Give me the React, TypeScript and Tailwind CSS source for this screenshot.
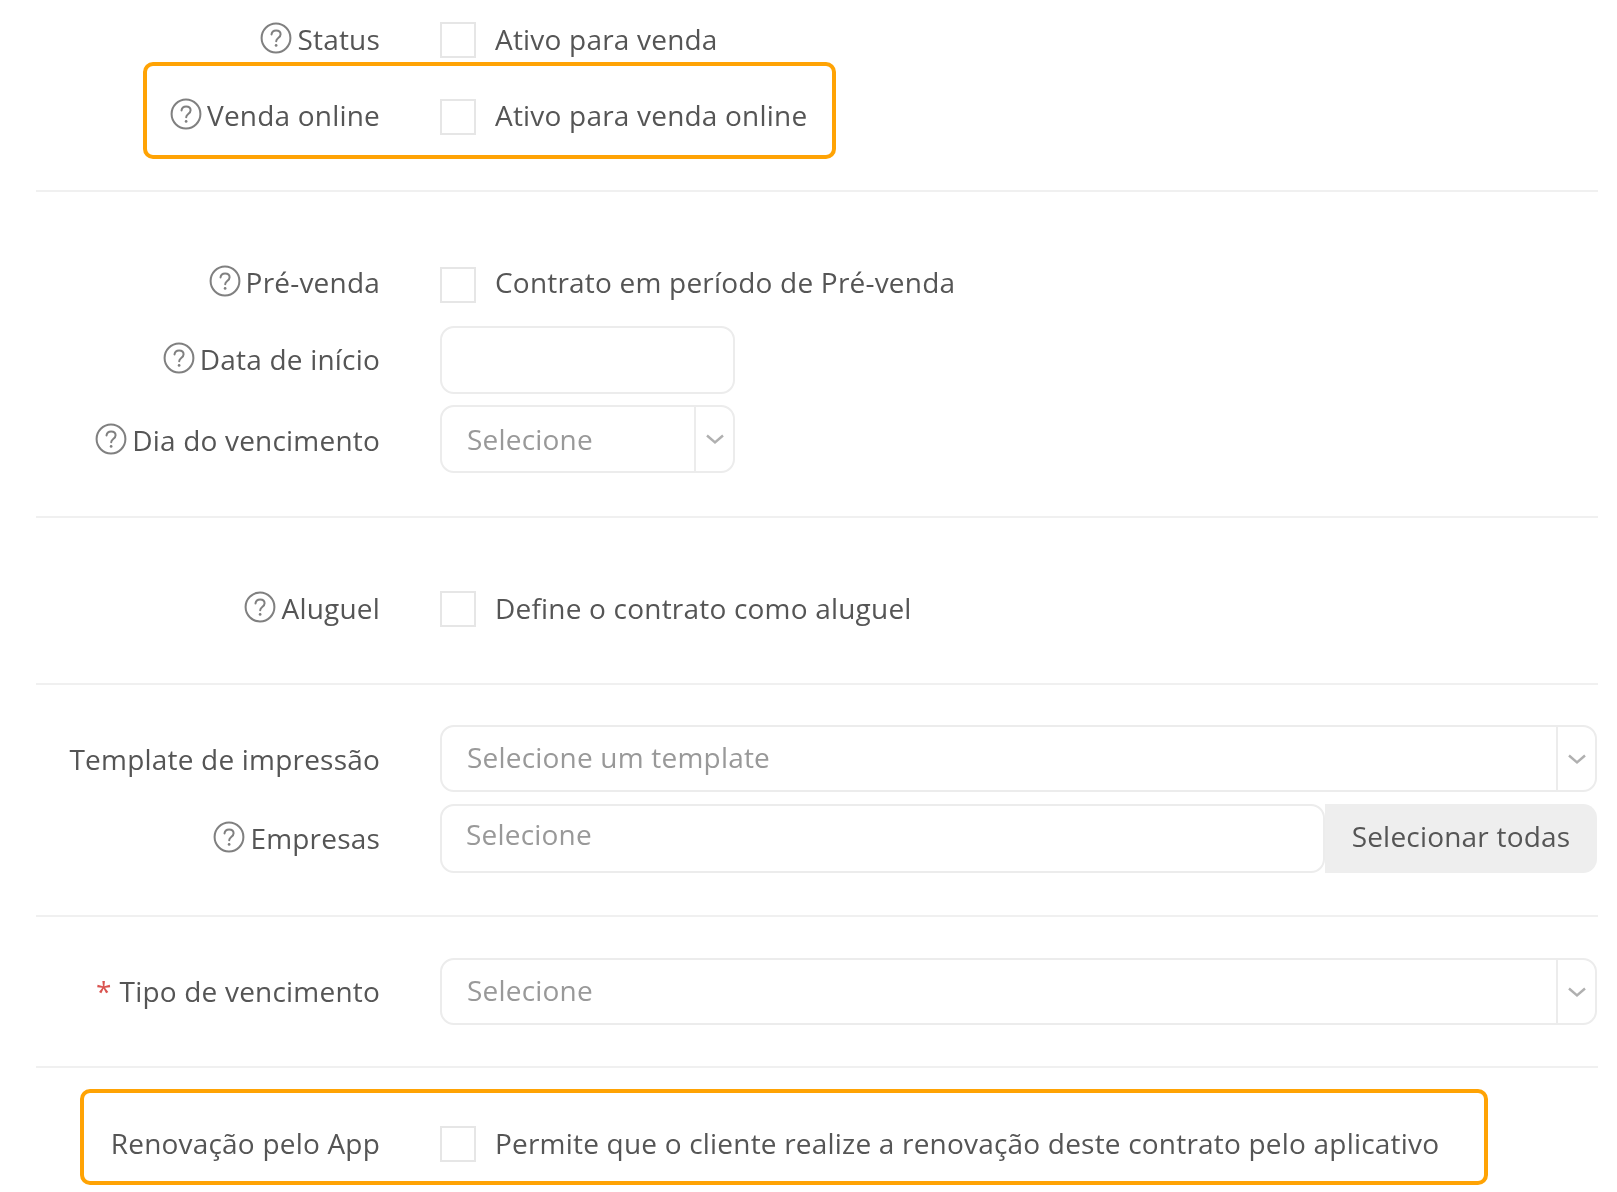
import React from "react";

const Help = () => (
  <svg width="32" height="32" viewBox="0 0 30 30" fill="none" className="shrink-0 mr-[5px] -mt-[2px]">
    <circle cx="15" cy="15" r="13.500" stroke="#808080" strokeWidth="1.900" />
    <path d="M10.800 11.600c.3-2.400 2-3.700 4.300-3.700 2.500 0 4.200 1.500 4.200 3.600 0 1.700-1 2.600-2.200 3.500-1.200.9-1.900 1.600-1.900 3.100" stroke="#808080" strokeWidth="1.900" strokeLinecap="round" />
    <circle cx="15.100" cy="22" r="1.300" fill="#808080" />
  </svg>
);

const Label = ({ text, help, required, pb }: { text: string; help?: boolean; required?: boolean; pb: string }) => (
  <div className={`w-[344px] shrink-0 flex items-center justify-end text-[#555] whitespace-nowrap ${pb}`}>
    {help && <Help />}
    {required && <span className="text-[#d9534f] mr-[8px]">*</span>}
    <span>{text}</span>
  </div>
);

const Box = () => <span className="w-[36px] h-[36px] shrink-0 border-2 border-[#e6e6e6] bg-white" />;

const CheckRow = ({ text, note, help = true, className, pb }: { text: string; note: string; help?: boolean; className: string; pb: string }) => (
  <div className={`flex items-center h-[36px] ${className}`}>
    <Label text={text} help={help} pb={pb} />
    <div className="ml-[60px] flex items-center">
      <Box />
      <span className={`ml-[19px] text-[#555] whitespace-nowrap ${pb}`}>{note}</span>
    </div>
  </div>
);

const Chevron = () => (
  <svg width="20" height="12" viewBox="0 0 20 12" fill="none">
    <path d="M2 2.500l8 7 8-7" stroke="#b0b0b0" strokeWidth="2.400" />
  </svg>
);

const Select = ({ text, w, h, pb }: { text: string; w: string; h: string; pb: string }) => (
  <div className={`${w} ${h} flex border-2 border-[#ececec] rounded-[14px] bg-white`}>
    <div className={`flex-1 flex items-center pl-[25px] text-[#999] whitespace-nowrap ${pb}`}>{text}</div>
    <div className="w-[39px] flex items-center justify-center border-l-2 border-[#ececec]">
      <Chevron />
    </div>
  </div>
);

const Divider = ({ className }: { className: string }) => <div className={`h-[2px] bg-[#f0f0f0] ${className}`} />;

export default function App() {
  return (
    <div
      className="relative w-[1617px] h-[1192px] overflow-hidden bg-white pl-[36px] pr-[19px] pt-[22px] text-[28px] tracking-[0.2px] blur-[0.4px]"
      style={{ fontFamily: '"Open Sans", sans-serif' }}
    >
      <CheckRow text="Status" note="Ativo para venda" className="" pb="pb-[2px]" />
      <CheckRow text="Venda online" note="Ativo para venda online" className="mt-[41px]" pb="pb-[4px]" />
      <Divider className="mt-[55px]" />

      <CheckRow text="Pré-venda" note="Contrato em período de Pré-venda" className="mt-[75px]" pb="pb-[6px]" />
      <div className="flex items-center h-[68px] mt-[23px]">
        <Label text="Data de início" help pb="pb-[2px]" />
        <div className="ml-[60px] w-[295px] h-full border-2 border-[#ececec] rounded-[14px] bg-white" />
      </div>
      <div className="flex items-center h-[68px] mt-[11px]">
        <Label text="Dia do vencimento" help pb="pt-[2px]" />
        <div className="ml-[60px]">
          <Select text="Selecione" w="w-[295px]" h="h-[68px]" pb="pb-[1px]" />
        </div>
      </div>
      <Divider className="mt-[43px]" />

      <CheckRow text="Aluguel" note="Define o contrato como aluguel" className="mt-[73px]" pb="pb-[2px]" />
      <Divider className="mt-[56px]" />

      <div className="flex items-center h-[67px] mt-[40px]">
        <Label text="Template de impressão" pb="pb-0" />
        <div className="ml-[60px]">
          <Select text="Selecione um template" w="w-[1157px]" h="h-[67px]" pb="pb-[4px]" />
        </div>
      </div>
      <div className="flex items-center h-[69px] mt-[12px]">
        <Label text="Empresas" help pb="pb-[2px]" />
        <div className="ml-[60px] flex w-[1157px] h-full">
          <div className="flex-1 flex items-center pl-[24px] pb-[10px] border-2 border-[#ececec] rounded-[14px] bg-white text-[#999]">
            Selecione
          </div>
          <button className="w-[272px] bg-[#eeeeee] rounded-r-[14px] text-[#555] pb-[6px] whitespace-nowrap">
            Selecionar todas
          </button>
        </div>
      </div>
      <Divider className="mt-[42px]" />

      <div className="flex items-center h-[67px] mt-[41px]">
        <Label text="Tipo de vencimento" required pb="pb-[2px]" />
        <div className="ml-[60px]">
          <Select text="Selecione" w="w-[1157px]" h="h-[67px]" pb="pb-[4px]" />
        </div>
      </div>
      <Divider className="mt-[41px]" />

      <CheckRow text="Renovação pelo App" note="Permite que o cliente realize a renovação deste contrato pelo aplicativo" help={false} className="mt-[58px]" pb="pb-[2px]" />

      <div className="absolute left-[143px] top-[62px] w-[693px] h-[97px] border-4 border-[#ffa304] rounded-[10px]" />
      <div className="absolute left-[80px] top-[1089px] w-[1408px] h-[96px] border-4 border-[#ffa304] rounded-[10px]" />
    </div>
  );
}
